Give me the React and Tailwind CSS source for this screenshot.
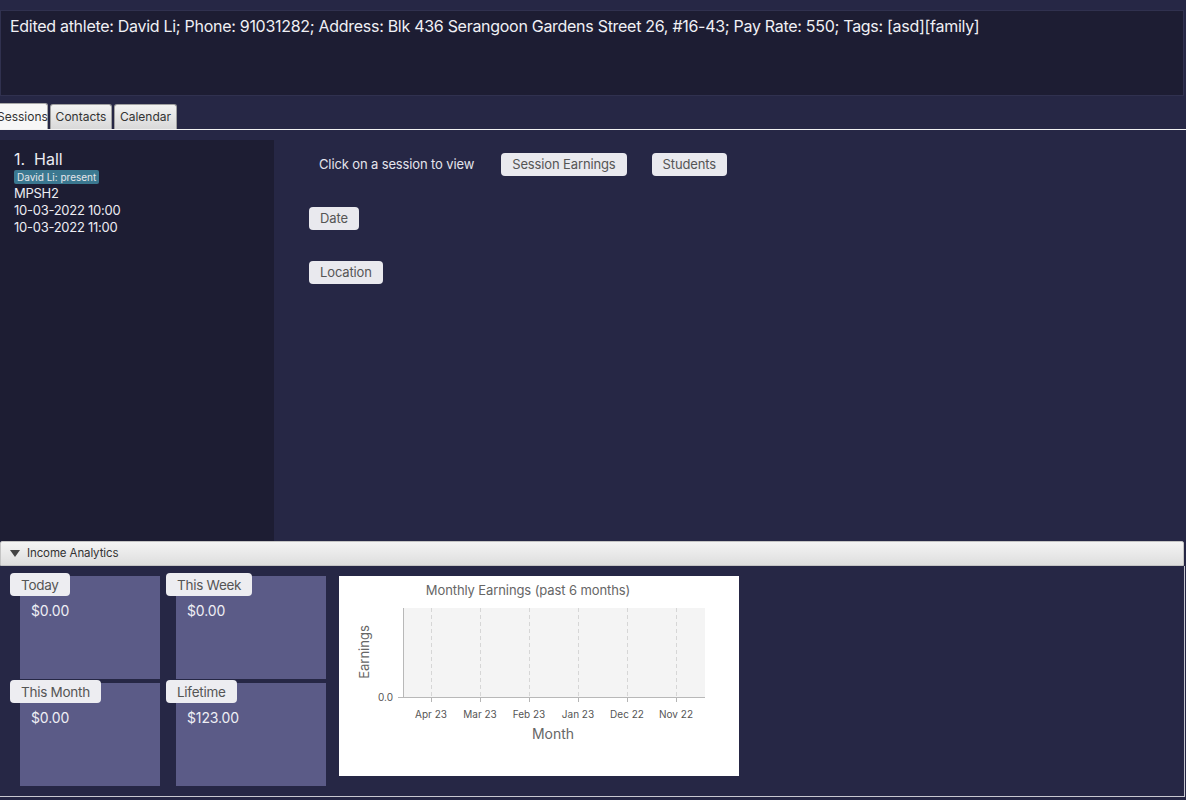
import React from "react";

const months = ["Apr 23", "Mar 23", "Feb 23", "Jan 23", "Dec 22", "Nov 22"];

const StatCard = ({ label, value, wide }) => (
  <div className={`${wide ? "w-[150px]" : "w-[140px]"} h-[103px] bg-[#5b5b87]`}>
    <div className="-ml-[10px] -mt-[3px] w-fit h-[23px] px-[11px] rounded-[4px] bg-[#ededf1] text-[13.5px] tracking-[-0.02em] leading-[24px] text-[#555]">
      {label}
    </div>
    <div className="pl-[11px] pt-[4px] text-[14px] tracking-[-0.01em] leading-[22px] text-[#eeeef4]">{value}</div>
  </div>
);

const Pill = ({ children }) => (
  <div className="h-[23px] px-[11px] rounded-[4px] bg-[#e9e9ee] text-[13px] tracking-[-0.01em] leading-[23px] text-[#555]">
    {children}
  </div>
);

const EarningsChart = () => (
  <div className="w-[400px] h-[200px] bg-white">
    <svg width="400" height="200" style={{ fontFamily: "Inter, 'Noto Sans', sans-serif" }}>
      <text x="189" y="19" textAnchor="middle" fontSize="13" fill="#666" letterSpacing="-0.1">
        Monthly Earnings (past 6 months)
      </text>
      <rect x="64" y="32" width="302" height="89" fill="#f4f4f4" />
      {months.map((m, i) => {
        const x = 92 + i * 49;
        return (
          <g key={m}>
            <line x1={x + 0.5} y1="32" x2={x + 0.5} y2="121" stroke="#d6d6d6" strokeDasharray="4 3" />
            <line x1={x + 0.5} y1="121" x2={x + 0.5} y2="126" stroke="#b5b5b5" />
            <text x={x} y="142" textAnchor="middle" fontSize="10" fill="#555">
              {m}
            </text>
          </g>
        );
      })}
      <line x1="64.5" y1="32" x2="64.5" y2="121" stroke="#b8b8b8" />
      <line x1="64" y1="121.5" x2="366" y2="121.5" stroke="#b8b8b8" />
      <line x1="59" y1="121.5" x2="64" y2="121.5" stroke="#b8b8b8" />
      <text x="54" y="125" textAnchor="end" fontSize="10" fill="#555">
        0.0
      </text>
      <text x="214" y="163" textAnchor="middle" fontSize="14" fill="#666">
        Month
      </text>
      <text
        x="30"
        y="76"
        textAnchor="middle"
        fontSize="13"
        fill="#666"
        transform="rotate(-90 30 76)"
      >
        Earnings
      </text>
    </svg>
  </div>
);

export default function App() {
  return (
    <div
      className="w-[1186px] h-[800px] bg-[#262745] flex flex-col overflow-hidden"
      style={{ fontFamily: "Inter, 'Noto Sans', sans-serif" }}
    >
      {/* Result display */}
      <div className="mt-[10px] mr-[2px] h-[86px] border border-[#30314f] bg-[#1d1d33] px-[9px] pt-[4px] text-[16px] tracking-[-0.018em] leading-[22px] text-[#f0f0f5]">
        Edited athlete: David Li; Phone: 91031282; Address: Blk 436 Serangoon Gardens Street 26, #16-43; Pay Rate: 550; Tags: [asd][family]
      </div>

      {/* Tabs */}
      <div className="mt-[7px] flex items-end gap-[2px] border-b border-[#f2f2f2] h-[27px]">
        <div className="-ml-[14px] h-[26px] w-[62px] pl-[10px] rounded-t-[3px] border border-b-0 border-[#a8a8a8] bg-[#f7f7f7] text-[12px] leading-[25px] text-[#333]">
          Sessions
        </div>
        <div className="h-[25px] w-[62px] rounded-t-[3px] border border-b-0 border-[#a0a0a0] bg-gradient-to-b from-[#f2f2f2] to-[#d9d9d9] text-center text-[12px] leading-[24px] text-[#333]">
          Contacts
        </div>
        <div className="h-[25px] w-[63px] rounded-t-[3px] border border-b-0 border-[#a0a0a0] bg-gradient-to-b from-[#f2f2f2] to-[#d9d9d9] text-center text-[12px] leading-[24px] text-[#333]">
          Calendar
        </div>
      </div>

      {/* Sessions content */}
      <div className="flex h-[411px] pt-[10px]">
        <div className="w-[274px] bg-[#1d1d33] pl-[14px] pt-[9px] text-[#ececf2]">
          <div className="text-[16px] leading-[20px]">1.&nbsp; Hall</div>
          <div className="mt-[1px] w-fit rounded-[2px] bg-[#3b7890] px-[3px] text-[10px] leading-[14px] text-[#e6e6ea]">
            David Li: present
          </div>
          <div className="text-[13px] tracking-[-0.02em] leading-[17px] mt-[1px]">MPSH2</div>
          <div className="text-[13px] tracking-[-0.02em] leading-[17px]">10-03-2022 10:00</div>
          <div className="text-[13px] tracking-[-0.02em] leading-[17px]">10-03-2022 11:00</div>
        </div>
        <div className="flex-1 pl-[35px] pt-[13px]">
          <div className="flex items-center">
            <div className="ml-[10px] text-[13px] tracking-[-0.01em] leading-[23px] text-[#e4e4ec]">Click on a session to view</div>
            <div className="ml-[27px]">
              <Pill>Session Earnings</Pill>
            </div>
            <div className="ml-[25px]">
              <Pill>Students</Pill>
            </div>
          </div>
          <div className="mt-[31px] w-fit">
            <Pill>Date</Pill>
          </div>
          <div className="mt-[31px] w-fit">
            <Pill>Location</Pill>
          </div>
        </div>
      </div>

      {/* Income analytics titled pane */}
      <div className="mr-[2px] h-[25px] flex items-center border border-[#c4c4c4] rounded-t-[2px] bg-gradient-to-b from-[#f4f4f4] to-[#dedede]">
        <svg width="10" height="8" viewBox="0 0 10 8" className="ml-[9px]">
          <path d="M0 0 L10 0 L5 7 Z" fill="#444" />
        </svg>
        <span className="ml-[7px] text-[11.5px] tracking-[-0.01em] text-[#333]">Income Analytics</span>
      </div>
      <div className="mr-[1px] h-[231px] border-r border-b border-[#c8c8d0] flex pl-[20px] pt-[10px]">
        <div className="grid grid-cols-[140px_150px] gap-x-[16px] gap-y-[4px] content-start">
          <StatCard label="Today" value="$0.00" />
          <StatCard label="This Week" value="$0.00" wide />
          <StatCard label="This Month" value="$0.00" />
          <StatCard label="Lifetime" value="$123.00" wide />
        </div>
        <div className="ml-[13px]">
          <EarningsChart />
        </div>
      </div>
    </div>
  );
}
